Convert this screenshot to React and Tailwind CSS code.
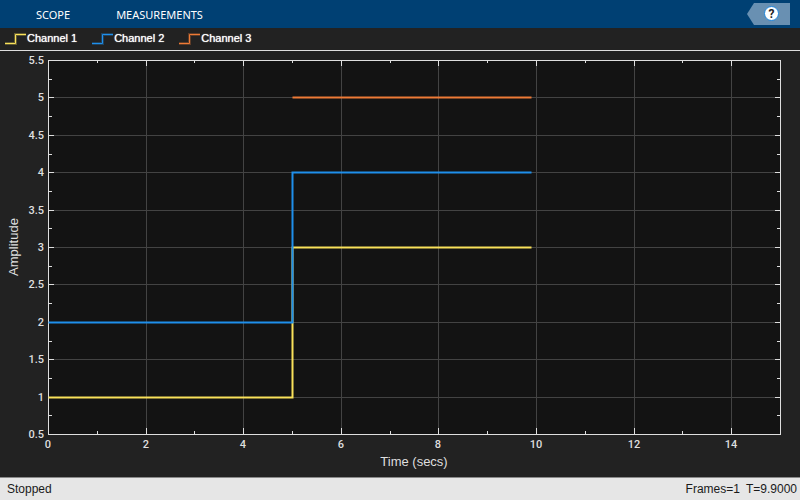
import React from "react";

const channels = [
  {
    name: "Channel 1",
    color: "#f9e15a",
    points: [[0, 1], [5, 1], [5, 3], [9.9, 3]],
  },
  {
    name: "Channel 2",
    color: "#1f8feb",
    points: [[0, 2], [5, 2], [5, 4], [9.9, 4]],
  },
  {
    name: "Channel 3",
    color: "#ee7a36",
    points: [[5, 5], [9.9, 5]],
  },
];

const plot = { left: 48, top: 9, width: 732, height: 374 };
const right = plot.left + plot.width;
const bottom = plot.top + plot.height;

const toX = (t) => plot.left + Math.round((t / 15) * plot.width);
const toY = (v) => plot.top + Math.round(((5.5 - v) / 5) * plot.height);

const xMajor = [0, 2, 4, 6, 8, 10, 12, 14];
const xMinor = [1, 3, 5, 7, 9, 11, 13];
const yMajor = [0.5, 1, 1.5, 2, 2.5, 3, 3.5, 4, 4.5, 5, 5.5];
const yMinor = [0.75, 1.25, 1.75, 2.25, 2.75, 3.25, 3.75, 4.25, 4.75, 5.25];

function Header() {
  return (
    <header className="flex h-7 items-center justify-between bg-[#004073] pr-2.5">
      <nav className="flex items-center gap-[46px] pl-9 pt-0.5 font-['Noto_Sans',sans-serif] text-[11px] text-white">
        <button>SCOPE</button>
        <button>MEASUREMENTS</button>
      </nav>
      <button aria-label="Help">
        <svg width="43" height="22" viewBox="0 0 43 22">
          <path d="M7 0H43V22H7L0 11Z" fill="#6990b2" />
          <circle cx="24.5" cy="10.5" r="7" fill="#fff" stroke="#1f86dc" />
          <text
            x="24.5"
            y="15"
            textAnchor="middle"
            fill="#222"
            className="font-['Roboto',sans-serif] text-[12px] font-bold"
          >
            ?
          </text>
        </svg>
      </button>
    </header>
  );
}

function Legend() {
  return (
    <ul className="flex h-[23px] items-center gap-3.5 border-b border-[#dfdfdf] pb-0.5 pl-1">
      {channels.map((channel) => (
        <li key={channel.name} className="flex items-center gap-px">
          <svg
            width="22"
            height="16"
            viewBox="0 0 22 16"
            fill="none"
            stroke={channel.color}
          >
            <path d="M1 13.5H11.5V4.5H22" strokeWidth="3" opacity="0.3" />
            <path d="M1 13.5H11.5V4.5H22" />
          </svg>
          <span className="font-['Liberation_Sans',sans-serif] text-[11px] text-white [text-shadow:0_0_1px_#fff]">
            {channel.name}
          </span>
        </li>
      ))}
    </ul>
  );
}

function Ticks() {
  const segments = [];
  const addX = (t, len) => {
    segments.push(`M${toX(t) + 0.5} ${plot.top}v${len}`);
    segments.push(`M${toX(t) + 0.5} ${bottom}v${-len}`);
  };
  const addY = (v, len) => {
    segments.push(`M${plot.left + 1} ${toY(v) + 0.5}h${len}`);
    segments.push(`M${right} ${toY(v) + 0.5}h${-len}`);
  };
  xMajor.forEach((t) => addX(t, 6));
  xMinor.forEach((t) => addX(t, 3));
  yMajor.forEach((v) => addY(v, 5));
  yMinor.forEach((v) => addY(v, 3));
  return <path d={segments.join("")} stroke="#dfdfdf" />;
}

function Chart() {
  return (
    <svg
      viewBox="0 0 800 426"
      fill="none"
      className="block w-full font-['Roboto',sans-serif]"
      role="img"
      aria-label="Amplitude over time"
    >
      <rect
        x={plot.left + 0.5}
        y={plot.top + 0.5}
        width={plot.width}
        height={plot.height}
        fill="#131313"
      />

      {/* Grid */}
      <g stroke="#434343">
        {xMajor.map((t) => (
          <path key={t} d={`M${toX(t) + 0.5} ${plot.top}V${bottom}`} />
        ))}
        {yMajor.map((v) => (
          <path key={v} d={`M${plot.left} ${toY(v) + 0.5}H${right}`} />
        ))}
      </g>

      {/* Axes */}
      <rect
        x={plot.left + 0.5}
        y={plot.top + 0.5}
        width={plot.width}
        height={plot.height}
        stroke="#dfdfdf"
      />
      <Ticks />

      {/* Signals */}
      {channels.map((channel) => (
        <polyline
          key={channel.name}
          points={channel.points
            .map(([t, v]) => `${toX(t) + 0.5},${toY(v) + 0.5}`)
            .join(" ")}
          stroke={channel.color}
          strokeWidth="2"
        />
      ))}

      {/* Labels */}
      <g fill="#dfdfdf" className="text-[11px] font-medium">
        {xMajor.map((t) => (
          <text key={t} x={toX(t)} y={bottom + 14} textAnchor="middle">
            {t}
          </text>
        ))}
        {yMajor.map((v) => (
          <text key={v} x={plot.left - 4} y={toY(v) + 4} textAnchor="end">
            {v}
          </text>
        ))}
      </g>
      <g
        fill="#dfdfdf"
        textAnchor="middle"
        className="font-['Liberation_Sans',sans-serif] text-[13px]"
      >
        <text x="414" y="415">
          Time (secs)
        </text>
        <text transform="translate(18 196) rotate(-90)">Amplitude</text>
      </g>
    </svg>
  );
}

function StatusBar() {
  return (
    <footer className="mt-auto flex h-[23px] items-center justify-between border-t border-[#8a8a8a] bg-[#e6e6e6] pl-[7px] pr-[3px] font-['Liberation_Sans',sans-serif] text-[12px] text-[#1a1a1a]">
      <span>Stopped</span>
      <span className="flex gap-1.5">
        <span>Frames=1</span>
        <span>T=9.9000</span>
      </span>
    </footer>
  );
}

export default function App() {
  return (
    <div className="flex min-h-screen flex-col bg-[#222222]">
      <Header />
      <Legend />
      <Chart />
      <StatusBar />
    </div>
  );
}
